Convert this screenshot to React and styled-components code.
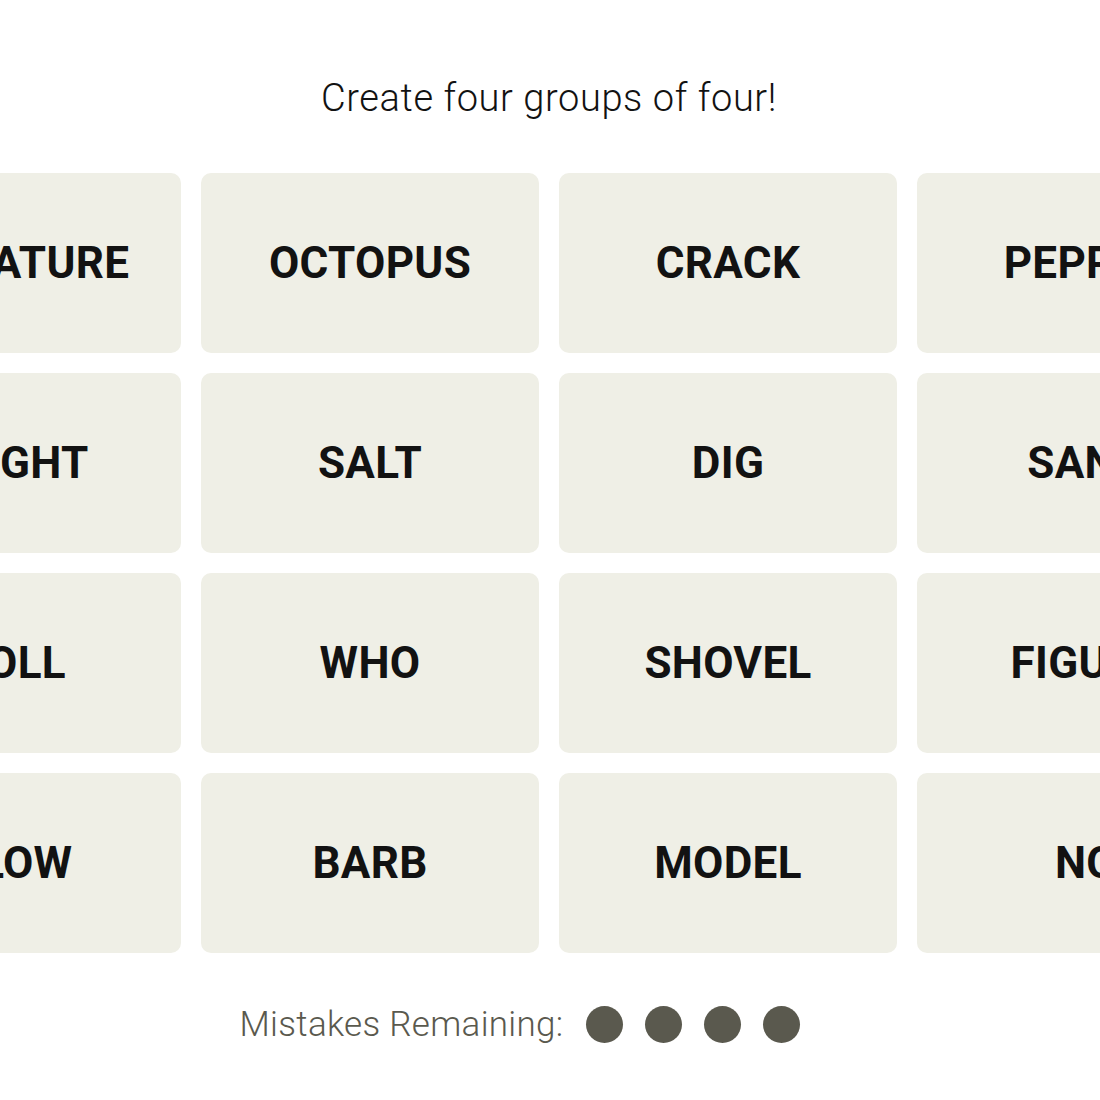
import React from 'react'
import styled, { createGlobalStyle } from 'styled-components'

const words = [
  ['MINIATURE', 'OCTOPUS', 'CRACK', 'PEPPER'],
  ['SLIGHT', 'SALT', 'DIG', 'SAND'],
  ['DOLL', 'WHO', 'SHOVEL', 'FIGURE'],
  ['PLOW', 'BARB', 'MODEL', 'NO'],
]

const App = () => {
  return (
    <Page>
      <GlobalStyle />
      <Prompt>Create four groups of four!</Prompt>
      <Board>
        {words.flat().map((w) => (
          <Tile key={w}>{w}</Tile>
        ))}
      </Board>
      <Mistakes>
        <span>Mistakes Remaining:</span>
        <Dots>
          {[0, 1, 2, 3].map((i) => (
            <Dot key={i} />
          ))}
        </Dots>
      </Mistakes>
    </Page>
  )
}

const GlobalStyle = createGlobalStyle`
  body {
    margin: 0;
    background: #fff;
    font-family: Roboto, "Liberation Sans", sans-serif;
  }
`

const Page = styled.main`
  width: 1100px;
  height: 1100px;
  overflow: hidden;
  display: flex;
  flex-direction: column;
  align-items: center;
  padding-top: 75px;
  box-sizing: border-box;
`

const Prompt = styled.h2`
  margin: 0;
  font-size: 38px;
  font-weight: 300;
  letter-spacing: 0.6px;
  color: #121212;
  line-height: 46px;
  padding-right: 2px;
`

const Board = styled.div`
  display: grid;
  grid-template-columns: repeat(4, 338px);
  grid-auto-rows: 180px;
  gap: 20px;
  margin-top: 52px;
  margin-right: 2px;
  flex-shrink: 0;
`

const Tile = styled.div`
  background: #efefe6;
  border-radius: 10px;
  display: flex;
  align-items: center;
  justify-content: center;
  font-size: 44px;
  font-weight: 700;
  color: #121212;
  letter-spacing: 0.3px;
  white-space: nowrap;
`

const Mistakes = styled.div`
  display: flex;
  align-items: center;
  gap: 23px;
  margin-top: 51px;
  font-size: 35px;
  font-weight: 300;
  letter-spacing: 0.3px;
  color: #5a594e;
  transform: translateX(-30px);
`

const Dots = styled.div`
  display: flex;
  gap: 22px;
`

const Dot = styled.span`
  width: 37px;
  height: 37px;
  border-radius: 50%;
  background: #5a594e;
`

export default App
